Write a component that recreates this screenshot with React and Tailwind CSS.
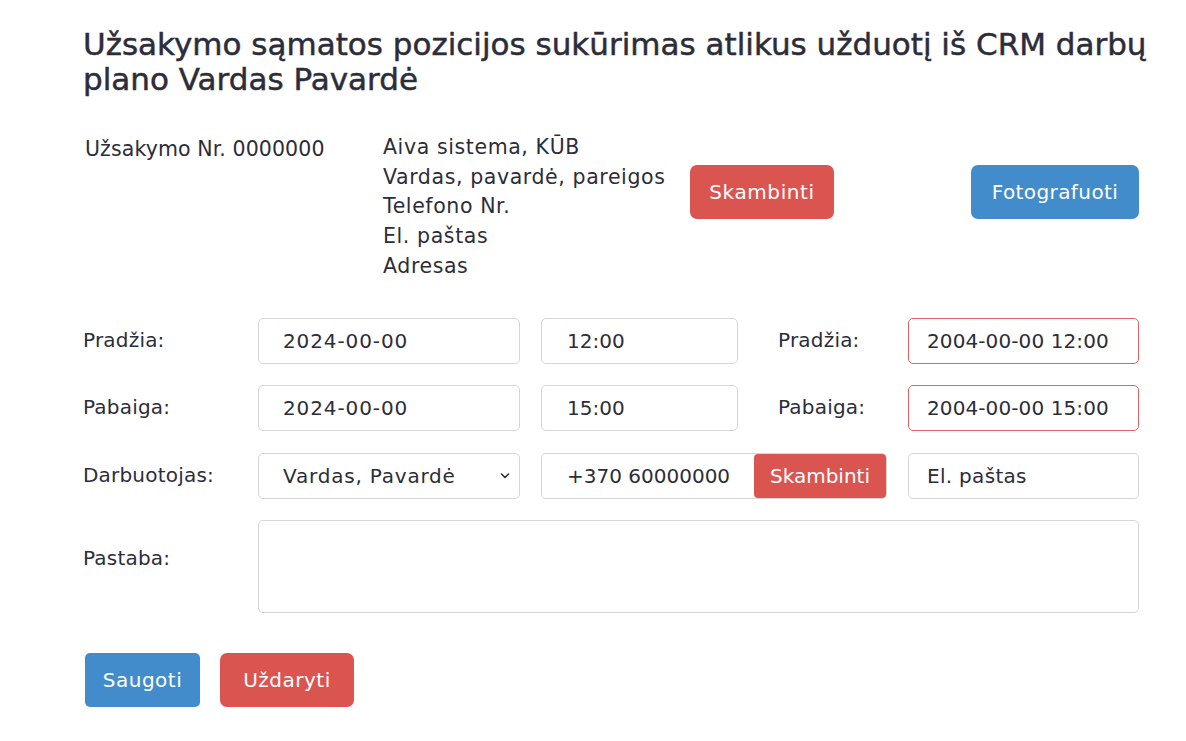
import React from 'react'

const font = { fontFamily: '"DejaVu Sans", "Liberation Sans", sans-serif' }

const fieldCls = 'h-[46px] rounded-[5px] border bg-white pr-3 text-[20px] text-[#2d2d3a] outline-none'

const Label = ({ children, className = '' }) => (
    <div className={'w-[175px] shrink-0 pt-[7px] text-[20px] leading-[30px] tracking-[0.2px] text-[#2d2d3a] ' + className}>{children}</div>
)

const App = () => {
    return (
        <div className='min-h-screen bg-white' style={font}>
            <div className='ml-[83px] w-[1056px] pt-[27px]'>
                <h1 className='w-[1085px] text-[31px] font-normal leading-[35px] text-[#2d2d3a] [-webkit-text-stroke:0.5px_#2d2d3a]'>
                    Užsakymo sąmatos pozicijos sukūrimas atlikus užduotį iš CRM darbų plano Vardas Pavardė
                </h1>

                {/* Order info */}
                <div className='mt-[36px] flex items-start'>
                    <div className='w-[300px] pl-[2px] pt-[1px] text-[20.5px] leading-[30px] tracking-[0.1px] text-[#2d2d3a]'>Užsakymo Nr. 0000000</div>
                    <div className='w-[307px] text-[20.5px] leading-[29.7px] tracking-[0.6px] text-[#2d2d3a]'>
                        <div>Aiva sistema, KŪB</div>
                        <div>Vardas, pavardė, pareigos</div>
                        <div>Telefono Nr.</div>
                        <div>El. paštas</div>
                        <div>Adresas</div>
                    </div>
                    <button className='mt-[32px] h-[54px] w-[144px] rounded-[7px] bg-[#db5550] text-[20px] tracking-[0.6px] text-white'>Skambinti</button>
                    <button className='ml-auto mt-[32px] h-[54px] w-[168px] rounded-[7px] bg-[#428ccb] text-[20px] tracking-[0.4px] text-white'>Fotografuoti</button>
                </div>

                {/* Form */}
                <div className='mt-[36px] flex flex-col gap-[21.5px]'>
                    <div className='flex items-start'>
                        <Label>Pradžia:</Label>
                        <input className={fieldCls + ' w-[262px] border-[#d6d6d6] pl-[24px] tracking-[0.9px]'} defaultValue='2024-00-00' />
                        <input className={fieldCls + ' ml-[21px] w-[197px] border-[#d6d6d6] pl-[25px]'} defaultValue='12:00' />
                        <div className='ml-[40px] w-[130px] pt-[7px] text-[20px] leading-[30px] tracking-[0.2px] text-[#2d2d3a]'>Pradžia:</div>
                        <input className={fieldCls + ' w-[231px] border-[#e06464] pl-[18px] tracking-[0.1px]'} defaultValue='2004-00-00 12:00' />
                    </div>
                    <div className='flex items-start'>
                        <Label>Pabaiga:</Label>
                        <input className={fieldCls + ' w-[262px] border-[#d6d6d6] pl-[24px] tracking-[0.9px]'} defaultValue='2024-00-00' />
                        <input className={fieldCls + ' ml-[21px] w-[197px] border-[#d6d6d6] pl-[25px]'} defaultValue='15:00' />
                        <div className='ml-[40px] w-[130px] pt-[7px] text-[20px] leading-[30px] tracking-[0.2px] text-[#2d2d3a]'>Pabaiga:</div>
                        <input className={fieldCls + ' w-[231px] border-[#e06464] pl-[18px] tracking-[0.1px]'} defaultValue='2004-00-00 15:00' />
                    </div>
                    <div className='flex items-start'>
                        <Label>Darbuotojas:</Label>
                        <div className='relative w-[262px]'>
                            <select className={fieldCls + ' w-full appearance-none border-[#d6d6d6] pl-[24px] tracking-[0.8px]'} defaultValue='1'>
                                <option value='1'>Vardas, Pavardė</option>
                            </select>
                            <svg className='pointer-events-none absolute right-[10px] top-[19px]' width='10' height='8' viewBox='0 0 10 8' fill='none'>
                                <path d='M1.5 2l3.5 3.5L8.5 2' stroke='#2d2d3a' strokeWidth='1.6' strokeLinecap='round' strokeLinejoin='round' />
                            </svg>
                        </div>
                        <div className='ml-[21px] flex h-[46px] w-[346px] rounded-[5px] border border-[#d6d6d6] bg-white'>
                            <input className='h-full min-w-0 flex-1 rounded-l-[5px] bg-transparent pl-[25px] text-[20px] text-[#2d2d3a] outline-none' defaultValue='+370 60000000' />
                            <button className='h-full w-[132px] rounded-[4px] bg-[#db5550] text-[20px] text-white'>Skambinti</button>
                        </div>
                        <input className={fieldCls + ' ml-[21px] w-[231px] border-[#d6d6d6] pl-[18px] tracking-[0.3px]'} defaultValue='El. paštas' />
                    </div>
                    <div className='flex items-start'>
                        <Label className='pt-[23px]'>Pastaba:</Label>
                        <textarea className='h-[93px] w-[881px] resize-none rounded-[5px] border border-[#d6d6d6] bg-white p-3 text-[20px] outline-none' />
                    </div>
                </div>

                {/* Actions */}
                <div className='mt-[40px] flex gap-[20px] pl-[2px]'>
                    <button className='h-[54px] w-[115px] rounded-[5px] bg-[#428ccb] text-[20px] tracking-[0.5px] text-white'>Saugoti</button>
                    <button className='h-[54px] w-[134px] rounded-[7px] bg-[#db5550] text-[20px] tracking-[0.5px] text-white'>Uždaryti</button>
                </div>
            </div>
        </div>
    )
}

export default App
